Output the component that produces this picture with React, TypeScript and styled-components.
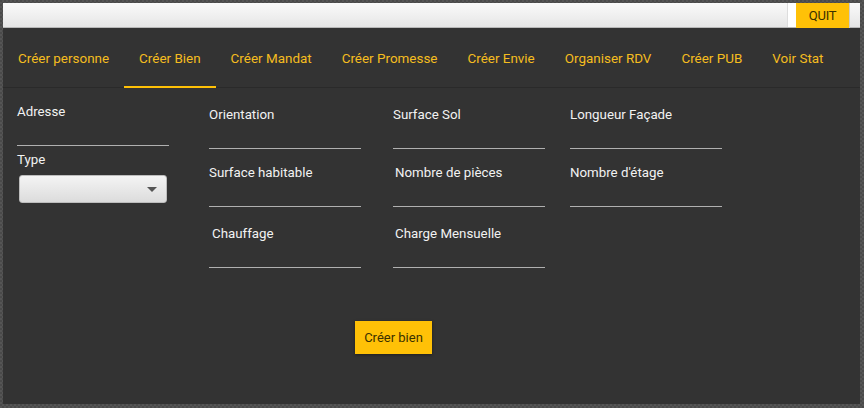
import React from 'react'
import styled, { createGlobalStyle } from 'styled-components'

const GlobalStyle = createGlobalStyle`
  html, body {
    margin: 0;
    padding: 0;
    height: 100%;
  }
  body {
    font-family: Roboto, "Noto Sans", Arial, sans-serif;
    background-color: #4a4a4a;
    background-image:
      linear-gradient(45deg, #555 25%, transparent 25%, transparent 75%, #555 75%),
      linear-gradient(45deg, #555 25%, transparent 25%, transparent 75%, #555 75%);
    background-size: 4px 4px;
    background-position: 0 0, 2px 2px;
  }
`

const Frame = styled.div`
  padding: 3px 4px 4px 3px;
`

const Panel = styled.div`
  width: 857px;
  height: 401px;
  background: #333;
  display: flex;
  flex-direction: column;
`

const TopBar = styled.div`
  height: 24px;
  display: flex;
  justify-content: flex-end;
  background: linear-gradient(#fafafa, #e6e6e6);
  border-bottom: 1px solid #b8b8b8;
`

const Spacer = styled.div`
  width: 8px;
  background: #fff;
  border-left: 1px solid #ddd;
`

const QuitButton = styled.button`
  width: 53px;
  height: 25px;
  margin-right: 11px;
  border: 0;
  padding: 0;
  background: #ffc107;
  color: #3a3000;
  font-family: Roboto, Arial, sans-serif;
  font-size: 13px;
  letter-spacing: -0.2px;
  box-shadow: 1px 0 0 #ccc;
`

const TabBar = styled.nav`
  height: 59px;
  display: flex;
  border-bottom: 1px solid #2a2a2a;
`

const Tab = styled.div<{ $active?: boolean }>`
  padding: 0 15px;
  display: flex;
  align-items: center;
  color: #f5bd1f;
  font-size: 13.45px;
  box-shadow: ${(p) => (p.$active ? 'inset 0 -2px 0 #ffc107' : 'none')};
  margin-bottom: -1px;
`

const Content = styled.div`
  display: flex;
  flex-direction: column;
  padding: 16px 0 0 14px;
`

const Grid = styled.div`
  display: grid;
  grid-template-columns: 192px 184px 177px 152px;
`

const Column = styled.div<{ $top?: number }>`
  display: flex;
  flex-direction: column;
  padding-top: ${(p) => p.$top ?? 0}px;
`

const Field = styled.div<{ $gap?: number }>`
  width: 152px;
  margin-top: ${(p) => p.$gap ?? 0}px;
`

const Label = styled.label<{ $shift?: number }>`
  display: block;
  padding-left: ${(p) => p.$shift ?? 0}px;
  color: #f2f2f2;
  font-size: 13.3px;
  line-height: 15px;
`

const Input = styled.input`
  display: block;
  width: 152px;
  height: 27px;
  box-sizing: border-box;
  border: 0;
  border-bottom: 1px solid #b0b0b0;
  background: transparent;
  color: #fff;
  outline: none;
  padding: 0;
`

const Select = styled.div`
  width: 148px;
  height: 28px;
  margin: 8px 0 0 2px;
  box-sizing: border-box;
  border: 1px solid #bdbdbd;
  border-radius: 3px;
  background: linear-gradient(#f4f4f4, #dcdcdc);
  display: flex;
  align-items: center;
  justify-content: flex-end;
  padding-right: 9px;
`

const Caret = styled.span`
  width: 0;
  height: 0;
  border-left: 5px solid transparent;
  border-right: 5px solid transparent;
  border-top: 5px solid #555;
`

const Actions = styled.div`
  padding: 53px 0 0 338px;
`

const SubmitButton = styled.button`
  width: 77px;
  height: 33px;
  border: 0;
  background: #ffc107;
  color: #3a3000;
  font-family: Roboto, Arial, sans-serif;
  font-size: 13px;
  box-shadow: 0 1px 3px rgba(0, 0, 0, 0.4);
`

const tabs = [
  'Créer personne',
  'Créer Bien',
  'Créer Mandat',
  'Créer Promesse',
  'Créer Envie',
  'Organiser RDV',
  'Créer PUB',
  'Voir Stat',
]

const columns = [
  [
    { label: 'Orientation', gap: 0, shift: 0 },
    { label: 'Surface habitable', gap: 16, shift: 0 },
    { label: 'Chauffage', gap: 19, shift: 3 },
  ],
  [
    { label: 'Surface Sol', gap: 0, shift: 0 },
    { label: 'Nombre de pièces', gap: 16, shift: 2 },
    { label: 'Charge Mensuelle', gap: 19, shift: 2 },
  ],
  [
    { label: 'Longueur Façade', gap: 0, shift: 0 },
    { label: "Nombre d'étage", gap: 16, shift: 0 },
  ],
]

export default function App() {
  return (
    <>
      <GlobalStyle />
      <Frame>
        <Panel>
          <TopBar>
            <Spacer />
            <QuitButton>QUIT</QuitButton>
          </TopBar>
          <TabBar>
            {tabs.map((t) => (
              <Tab key={t} $active={t === 'Créer Bien'}>
                {t}
              </Tab>
            ))}
          </TabBar>
          <Content>
            <Grid>
              <Column>
                <Field>
                  <Label>Adresse</Label>
                  <Input type="text" />
                </Field>
                <Field $gap={6}>
                  <Label>Type</Label>
                  <Select>
                    <Caret />
                  </Select>
                </Field>
              </Column>
              {columns.map((col, i) => (
                <Column key={i} $top={3}>
                  {col.map((f) => (
                    <Field key={f.label} $gap={f.gap}>
                      <Label $shift={f.shift}>{f.label}</Label>
                      <Input type="text" />
                    </Field>
                  ))}
                </Column>
              ))}
            </Grid>
            <Actions>
              <SubmitButton>Créer bien</SubmitButton>
            </Actions>
          </Content>
        </Panel>
      </Frame>
    </>
  )
}
